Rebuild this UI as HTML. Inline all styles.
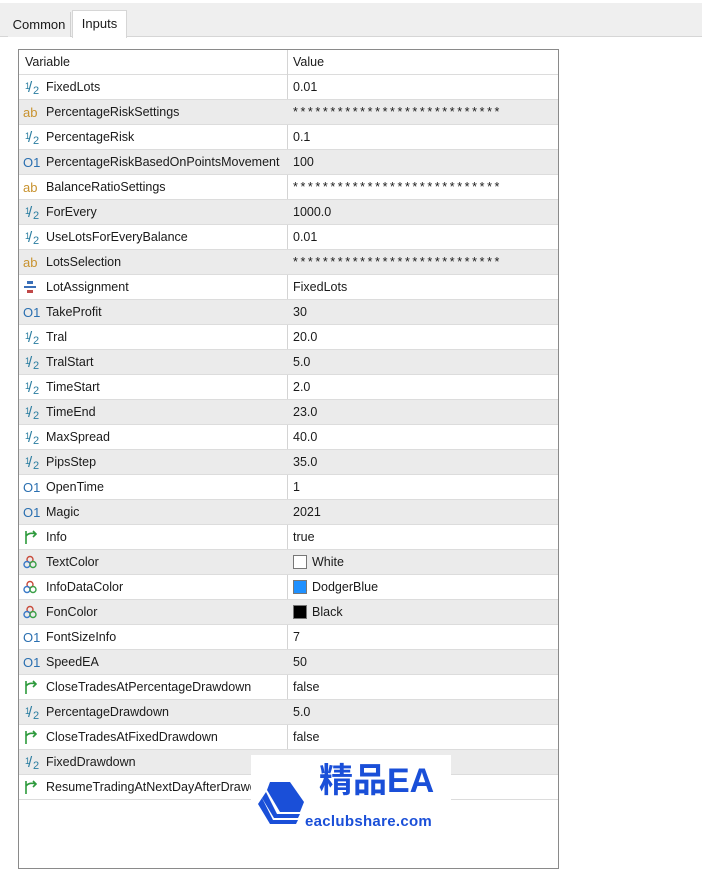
<!DOCTYPE html>
<html><head><meta charset="utf-8">
<style>
*{margin:0;padding:0;box-sizing:border-box}
body{width:702px;height:860px;background:#fff;font-family:"Liberation Sans",Arial,sans-serif;font-size:12.5px;color:#1a1a1a;position:relative;overflow:hidden}
.strip{position:absolute;left:0;top:3px;width:702px;height:34px;background:#efefef;border-bottom:1px solid #d6d6d6}
.tab{position:absolute;top:12px;height:25px;line-height:25px;font-size:13px;text-align:center}
.t1{left:8px;width:63px;background:#efefef;border-right:1px solid #d0d0d0}
.t2{left:72px;top:10px;height:28px;width:55px;background:#fff;border:1px solid #d6d6d6;border-bottom:none;line-height:26px}
.box{position:absolute;left:18px;top:49px;width:541px;height:820px;border:1px solid #8a8a8a;background:#fff}
.row{position:absolute;left:0;width:539px;height:25px;line-height:25px;border-bottom:1px solid #dcdcdc}
.row.g{background:#ebebeb}
.row .n{position:absolute;left:27px;top:0}
.row .v{position:absolute;left:274px;top:0}
.row .ic{position:absolute;left:4px;top:0;width:20px;text-align:left;font-size:13px}
.st{letter-spacing:2.6px}
.div{position:absolute;left:268px;top:0;width:1px;height:750px;background:#d4d4d4}
.half{color:#2a7da0;position:absolute;left:4px;top:0;width:20px;height:25px}
.half i{position:absolute;font-style:normal;font-size:9px;line-height:9px}
.half .a{left:2px;top:7px}
.half .s{left:5px;top:5px;font-size:15px;line-height:15px}
.half .b{left:10px;top:11px;font-size:11px;line-height:11px}
.ab{color:#c8922e}
.o1{color:#2a6fb0;font-size:12px}
.sw{display:inline-block;width:14px;height:14px;border:1px solid #777;vertical-align:-3px;margin-right:5px}
.wm{position:absolute;left:251px;top:755px;width:200px;height:75px;background:#fff}
</style></head><body>
<div class="strip"></div>
<div class="tab t1">Common</div>
<div class="tab t2">Inputs</div>
<div class="box">
<div class="row" style="top:0"><span style="position:absolute;left:6px">Variable</span><span class="v">Value</span></div>
<div class="div"></div>
<div class="row" style="top:25px"><span class="half"><i class="a">1</i><i class="s">/</i><i class="b">2</i></span><span class="n">FixedLots</span><span class="v">0.01</span></div>
<div class="row g" style="top:50px"><span class="ic ab">ab</span><span class="n">PercentageRiskSettings</span><span class="v st">****************************</span></div>
<div class="row" style="top:75px"><span class="half"><i class="a">1</i><i class="s">/</i><i class="b">2</i></span><span class="n">PercentageRisk</span><span class="v">0.1</span></div>
<div class="row g" style="top:100px"><span class="ic o1">O1</span><span class="n">PercentageRiskBasedOnPointsMovement</span><span class="v">100</span></div>
<div class="row" style="top:125px"><span class="ic ab">ab</span><span class="n">BalanceRatioSettings</span><span class="v st">****************************</span></div>
<div class="row g" style="top:150px"><span class="half"><i class="a">1</i><i class="s">/</i><i class="b">2</i></span><span class="n">ForEvery</span><span class="v">1000.0</span></div>
<div class="row" style="top:175px"><span class="half"><i class="a">1</i><i class="s">/</i><i class="b">2</i></span><span class="n">UseLotsForEveryBalance</span><span class="v">0.01</span></div>
<div class="row g" style="top:200px"><span class="ic ab">ab</span><span class="n">LotsSelection</span><span class="v st">****************************</span></div>
<div class="row" style="top:225px"><span class="ic"><svg width="14" height="14" viewBox="0 0 14 14" style="vertical-align:-2px"><rect x="4" y="1" width="6" height="3" fill="#3a6fb8"/><rect x="1" y="6" width="12" height="2" fill="#3a6fb8"/><rect x="4" y="10" width="6" height="3" fill="#c04848"/></svg></span><span class="n">LotAssignment</span><span class="v">FixedLots</span></div>
<div class="row g" style="top:250px"><span class="ic o1">O1</span><span class="n">TakeProfit</span><span class="v">30</span></div>
<div class="row" style="top:275px"><span class="half"><i class="a">1</i><i class="s">/</i><i class="b">2</i></span><span class="n">Tral</span><span class="v">20.0</span></div>
<div class="row g" style="top:300px"><span class="half"><i class="a">1</i><i class="s">/</i><i class="b">2</i></span><span class="n">TralStart</span><span class="v">5.0</span></div>
<div class="row" style="top:325px"><span class="half"><i class="a">1</i><i class="s">/</i><i class="b">2</i></span><span class="n">TimeStart</span><span class="v">2.0</span></div>
<div class="row g" style="top:350px"><span class="half"><i class="a">1</i><i class="s">/</i><i class="b">2</i></span><span class="n">TimeEnd</span><span class="v">23.0</span></div>
<div class="row" style="top:375px"><span class="half"><i class="a">1</i><i class="s">/</i><i class="b">2</i></span><span class="n">MaxSpread</span><span class="v">40.0</span></div>
<div class="row g" style="top:400px"><span class="half"><i class="a">1</i><i class="s">/</i><i class="b">2</i></span><span class="n">PipsStep</span><span class="v">35.0</span></div>
<div class="row" style="top:425px"><span class="ic o1">O1</span><span class="n">OpenTime</span><span class="v">1</span></div>
<div class="row g" style="top:450px"><span class="ic o1">O1</span><span class="n">Magic</span><span class="v">2021</span></div>
<div class="row" style="top:475px"><span class="ic"><svg width="16" height="16" viewBox="0 0 16 16" style="vertical-align:-3px"><path d="M3 15 V2 M3 7 Q6 3 13 5 M10 2 L13 5 L10 8" stroke="#2d9a3c" stroke-width="1.6" fill="none"/></svg></span><span class="n">Info</span><span class="v">true</span></div>
<div class="row g" style="top:500px"><span class="ic"><svg width="14" height="14" viewBox="0 0 14 14" style="vertical-align:-2px"><circle cx="7" cy="4.5" r="3" stroke="#c84a3a" stroke-width="1.4" fill="none"/><circle cx="4" cy="9.5" r="3" stroke="#3a7ac8" stroke-width="1.4" fill="none"/><circle cx="10" cy="9.5" r="3" stroke="#3aa048" stroke-width="1.4" fill="none"/></svg></span><span class="n">TextColor</span><span class="v"><span class="sw" style="background:#fff"></span>White</span></div>
<div class="row" style="top:525px"><span class="ic"><svg width="14" height="14" viewBox="0 0 14 14" style="vertical-align:-2px"><circle cx="7" cy="4.5" r="3" stroke="#c84a3a" stroke-width="1.4" fill="none"/><circle cx="4" cy="9.5" r="3" stroke="#3a7ac8" stroke-width="1.4" fill="none"/><circle cx="10" cy="9.5" r="3" stroke="#3aa048" stroke-width="1.4" fill="none"/></svg></span><span class="n">InfoDataColor</span><span class="v"><span class="sw" style="background:#1e90ff"></span>DodgerBlue</span></div>
<div class="row g" style="top:550px"><span class="ic"><svg width="14" height="14" viewBox="0 0 14 14" style="vertical-align:-2px"><circle cx="7" cy="4.5" r="3" stroke="#c84a3a" stroke-width="1.4" fill="none"/><circle cx="4" cy="9.5" r="3" stroke="#3a7ac8" stroke-width="1.4" fill="none"/><circle cx="10" cy="9.5" r="3" stroke="#3aa048" stroke-width="1.4" fill="none"/></svg></span><span class="n">FonColor</span><span class="v"><span class="sw" style="background:#000"></span>Black</span></div>
<div class="row" style="top:575px"><span class="ic o1">O1</span><span class="n">FontSizeInfo</span><span class="v">7</span></div>
<div class="row g" style="top:600px"><span class="ic o1">O1</span><span class="n">SpeedEA</span><span class="v">50</span></div>
<div class="row" style="top:625px"><span class="ic"><svg width="16" height="16" viewBox="0 0 16 16" style="vertical-align:-3px"><path d="M3 15 V2 M3 7 Q6 3 13 5 M10 2 L13 5 L10 8" stroke="#2d9a3c" stroke-width="1.6" fill="none"/></svg></span><span class="n">CloseTradesAtPercentageDrawdown</span><span class="v">false</span></div>
<div class="row g" style="top:650px"><span class="half"><i class="a">1</i><i class="s">/</i><i class="b">2</i></span><span class="n">PercentageDrawdown</span><span class="v">5.0</span></div>
<div class="row" style="top:675px"><span class="ic"><svg width="16" height="16" viewBox="0 0 16 16" style="vertical-align:-3px"><path d="M3 15 V2 M3 7 Q6 3 13 5 M10 2 L13 5 L10 8" stroke="#2d9a3c" stroke-width="1.6" fill="none"/></svg></span><span class="n">CloseTradesAtFixedDrawdown</span><span class="v">false</span></div>
<div class="row g" style="top:700px"><span class="half"><i class="a">1</i><i class="s">/</i><i class="b">2</i></span><span class="n">FixedDrawdown</span><span class="v"></span></div>
<div class="row" style="top:725px"><span class="ic"><svg width="16" height="16" viewBox="0 0 16 16" style="vertical-align:-3px"><path d="M3 15 V2 M3 7 Q6 3 13 5 M10 2 L13 5 L10 8" stroke="#2d9a3c" stroke-width="1.6" fill="none"/></svg></span><span class="n">ResumeTradingAtNextDayAfterDrawdown</span><span class="v"></span></div>
</div>
<div class="wm">
<svg width="50" height="46" viewBox="0 0 50 46" style="position:absolute;left:5px;top:25px">
<path d="M6 18 L2 24 L14 44 L40 44 L42 40 L17 40 Z" fill="#1a4fd8"/>
<path d="M10 12 L6 18 L18 38 L42 38 L44 34 L21 34 Z" fill="#1a4fd8"/>
<path d="M14 2 L34 2 L48 22 L44 32 L24 32 L11 10 Z" fill="#1a4fd8"/>
</svg>
<div style="position:absolute;left:68px;top:6px;font-family:'Liberation Sans','Noto Sans CJK SC',sans-serif;font-weight:bold;font-size:34px;color:#1a4fd8;line-height:40px">精品EA</div>
<div style="position:absolute;left:54px;top:58px;font-weight:bold;font-size:15px;color:#1a4fd8;letter-spacing:0.3px">eaclubshare.com</div>
</div>
</body></html>
